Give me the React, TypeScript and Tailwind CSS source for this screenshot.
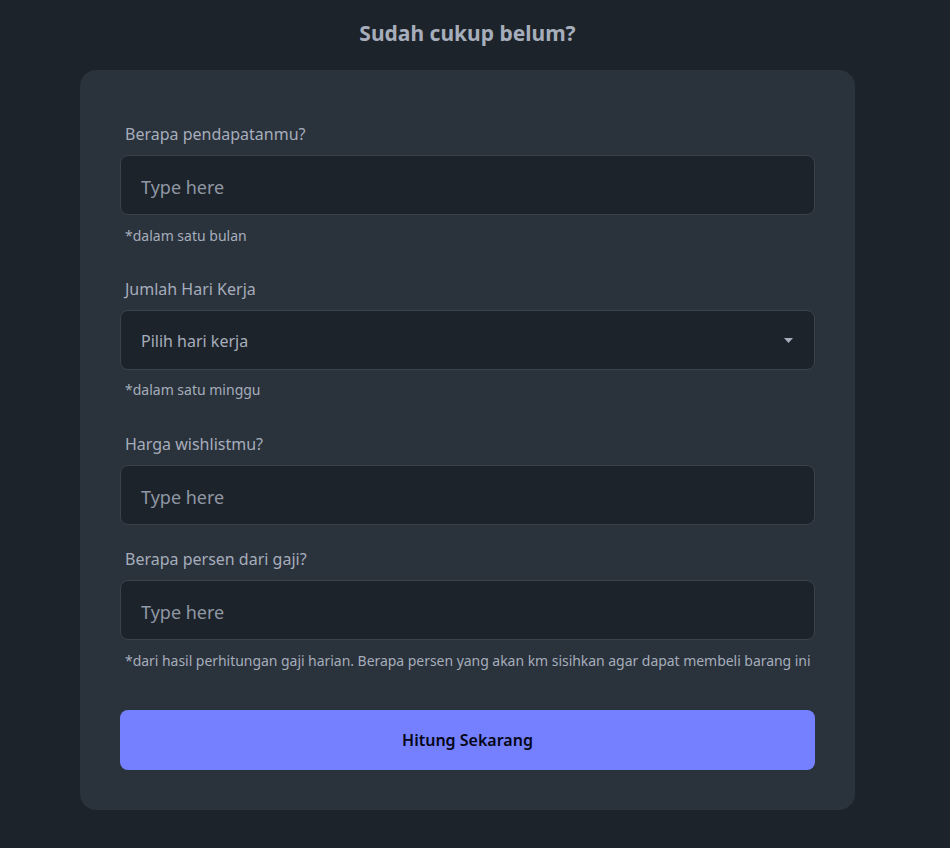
export default function App() {
  const font = { fontFamily: '"Noto Sans", "Open Sans", sans-serif' };
  return (
    <div className="min-h-[848px] w-full bg-[#1d232a] pr-[15px] pt-[19px] text-[#a6adbb] [font-family:'Noto_Sans',sans-serif]">
      <h1 className="text-center text-[21px] font-bold leading-7">Sudah cukup belum?</h1>

      <div className="mx-auto mt-[23px] w-[775px] rounded-2xl bg-[#2a323c] px-10 pt-[52px] pb-10">
        {/* pendapatan */}
        <p className="px-[5px] text-[16px] leading-6">Berapa pendapatanmu?</p>
        <input
          type="text"
          placeholder="Type here"
          className="mt-[9px] h-[60px] w-full rounded-lg border border-[#3a424c] bg-[#1d232a] px-5 pt-1 text-[18px] text-[#a6adbb] outline-none placeholder:text-[#8f97a4]"
        />
        <p className="mt-[11px] px-[5px] text-[14px] leading-5">*dalam satu bulan</p>

        {/* hari kerja */}
        <p className="mt-[31px] px-[5px] text-[16px] leading-6">Jumlah Hari Kerja</p>
        <div className="mt-[9px] flex h-[60px] w-full items-center justify-between rounded-lg border border-[#3a424c] bg-[#1d232a] pl-5 pr-[21px]">
          <span className="pt-[2px] text-[16px]">Pilih hari kerja</span>
          <svg width="9" height="5" viewBox="0 0 9 5">
            <path d="M0 0h9L4.5 5z" fill="#a6adbb" />
          </svg>
        </div>
        <p className="mt-[10px] px-[5px] text-[14px] leading-5">*dalam satu minggu</p>

        {/* wishlist */}
        <p className="mt-[32px] px-[5px] text-[16px] leading-6">Harga wishlistmu?</p>
        <input
          type="text"
          placeholder="Type here"
          className="mt-[9px] h-[60px] w-full rounded-lg border border-[#3a424c] bg-[#1d232a] px-5 pt-1 text-[18px] text-[#a6adbb] outline-none placeholder:text-[#8f97a4]"
        />

        {/* persen */}
        <p className="mt-[22px] px-[5px] text-[16px] leading-6">Berapa persen dari gaji?</p>
        <input
          type="text"
          placeholder="Type here"
          className="mt-[9px] h-[60px] w-full rounded-lg border border-[#3a424c] bg-[#1d232a] px-5 pt-1 text-[18px] text-[#a6adbb] outline-none placeholder:text-[#8f97a4]"
        />
        <p className="mt-[11px] whitespace-nowrap px-[5px] text-[14px] leading-5 tracking-[-0.04px]">
          *dari hasil perhitungan gaji harian. Berapa persen yang akan km sisihkan agar dapat membeli barang ini
        </p>

        <button
          style={font}
          className="mt-[39px] h-[60px] w-full rounded-lg bg-[#7480ff] text-[16px] font-semibold text-[#050617]"
        >
          Hitung Sekarang
        </button>
      </div>
    </div>
  );
}
